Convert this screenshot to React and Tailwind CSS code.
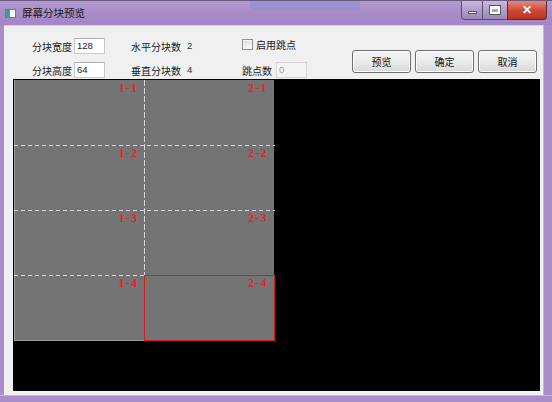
import React from "react";

const cjk = { fontFamily: '"Noto Sans CJK SC", "Noto Sans", sans-serif' };
const num = { fontFamily: '"Liberation Sans", Arial, sans-serif' };
const serif = { fontFamily: '"Liberation Serif", "Times New Roman", serif' };

const cells = [
  ["1-1", "2-1"],
  ["1-2", "2-2"],
  ["1-3", "2-3"],
  ["1-4", "2-4"],
];

function WinButtons() {
  return (
    <div className="flex h-[19px] self-start">
      <div className="w-[22px] h-full rounded-bl-[4px] border border-t-0 border-[#5d4f73] bg-gradient-to-b from-[#c9b8de] to-[#9b86bb] flex items-center justify-center">
        <div className="w-[9px] h-[3px] bg-white border border-[#555] mt-[5px]" />
      </div>
      <div className="w-[24px] h-full border-b border-[#5d4f73] bg-gradient-to-b from-[#c9b8de] to-[#9b86bb] flex items-center justify-center">
        <div className="w-[10px] h-[8px] border-2 border-t-[3px] border-white outline outline-1 outline-[#555]" />
      </div>
      <div className="w-[40px] h-full rounded-br-[4px] border border-t-0 border-[#5d2a24] bg-gradient-to-b from-[#e48a7c] via-[#cf4a3a] to-[#b83424] flex items-center justify-center">
        <span className="text-white text-[12px] font-bold leading-none" style={num}>✕</span>
      </div>
    </div>
  );
}

function TextBox({ value, disabled }) {
  return (
    <div
      className={
        "w-[31px] h-[16px] border px-[2px] flex items-center text-[9.5px] " +
        (disabled
          ? "bg-[#f4f4f4] border-[#d5d5d5] text-[#9a9a9a]"
          : "bg-white border-[#c5c9d0] border-t-[#abadb3] text-[#222]")
      }
      style={num}
    >
      {value}
    </div>
  );
}

function Btn({ children }) {
  return (
    <div className="w-[59px] h-[23px] rounded-[3px] border border-[#707070] bg-gradient-to-b from-[#f3f3f3] via-[#ebebeb] to-[#d8d8d8] flex items-center justify-center text-[10px] text-[#111] shadow-[inset_0_0_0_1px_#fcfcfc]">
      {children}
    </div>
  );
}

export default function App() {
  return (
    <div className="w-[552px] h-[402px] bg-[#a98cc8] flex flex-col overflow-hidden" style={cjk}>
      {/* title bar */}
      <div className="h-[25px] flex border-t border-[#6b5a80] bg-gradient-to-b from-[#b39bd0] via-[#a88bc7] to-[#a387c4] relative">
        <div className="absolute left-[250px] top-0 w-[110px] h-[9px] rounded-b-[4px] bg-[#8c8fd6] opacity-60" />
        <div className="flex items-center gap-[6px] pl-[5px] flex-1">
          <div className="w-[11px] h-[9px] border border-[#6b7d86] bg-white flex">
            <div className="w-[4px] h-full bg-[#3f9f8f]" />
          </div>
          <span className="text-[10.5px] text-[#1a1a1a] leading-none">屏幕分块预览</span>
        </div>
        <div className="pr-[5px]">
          <WinButtons />
        </div>
      </div>

      {/* body */}
      <div className="flex flex-1">
        <div className="w-[4px]" />
        <div className="w-[539px] bg-[#f0f0f0] flex flex-col border-t border-[#d8d0e2]">
          {/* controls */}
          <div className="h-[53px] flex items-start text-[10px] text-[#1a1a1a]">
            <div className="w-[28px]" />
            <div className="w-[99px] flex flex-col gap-[8px] pt-[12px]">
              <div className="h-[16px] flex items-center gap-[2px]">
                <span className="w-[40px]">分块宽度</span>
                <TextBox value="128" />
              </div>
              <div className="h-[16px] flex items-center gap-[2px]">
                <span className="w-[40px]">分块高度</span>
                <TextBox value="64" />
              </div>
            </div>
            <div className="w-[111px] flex flex-col gap-[8px] pt-[12px]">
              <div className="h-[16px] flex items-center gap-[6px]">
                <span>水平分块数</span>
                <span className="text-[9.5px] text-[#333]" style={num}>2</span>
              </div>
              <div className="h-[16px] flex items-center gap-[6px]">
                <span>垂直分块数</span>
                <span className="text-[9.5px] text-[#333]" style={num}>4</span>
              </div>
            </div>
            <div className="w-[110px] flex flex-col gap-[8px] pt-[10px]">
              <div className="h-[16px] flex items-center gap-[3px]">
                <div className="w-[11px] h-[11px] border border-[#8e8f8f] bg-gradient-to-br from-[#dcdcdc] to-[#fbfbfb] shadow-[inset_0_0_0_1px_#f4f4f4]" />
                <span>启用跳点</span>
              </div>
              <div className="h-[16px] flex items-center gap-[4px] mt-[2px]">
                <span>跳点数</span>
                <TextBox value="0" disabled />
              </div>
            </div>
            <div className="flex gap-[4px] pt-[24px]">
              <Btn>预览</Btn>
              <Btn>确定</Btn>
              <Btn>取消</Btn>
            </div>
          </div>

          {/* canvas */}
          <div className="flex flex-1 pl-[9px] pr-[3px] pb-[4px]">
            <div className="flex-1 bg-black pt-[1px] pl-[1px]">
              <div className="relative w-[260px] h-[261px] bg-[#747474] border-l border-b border-[#9c9c9c]">
                <div className="grid grid-cols-2 grid-rows-4 w-full h-[260px]">
                  {cells.flat().map((c) => (
                    <div key={c} className="flex justify-end items-start pr-[6px] pt-[3px]">
                      <span className="text-[11.5px] font-bold leading-none text-[#e8232f] tracking-[1.5px]" style={serif}>
                        {c}
                      </span>
                    </div>
                  ))}
                </div>
                <svg className="absolute left-[-1px] top-0" width="262" height="262">
                  <g stroke="#d6d6d6" strokeWidth="1" fill="none">
                    <line x1="0" y1="65.5" x2="261" y2="65.5" strokeDasharray="4 3" />
                    <line x1="0" y1="130.5" x2="261" y2="130.5" strokeDasharray="4 3" />
                    <line x1="0" y1="195.5" x2="130" y2="195.5" strokeDasharray="4 3" />
                    <line x1="130.5" y1="0" x2="130.5" y2="195" strokeDasharray="6 2" />
                  </g>
                  <rect x="130.5" y="195.5" width="130" height="65" fill="none" stroke="#d41e1e" strokeWidth="1" />
                </svg>
              </div>
            </div>
          </div>
        </div>
        <div className="flex-1 border-l border-[#c4b4da]" />
      </div>
      <div className="h-[7px] border-t border-[#c4b4da]" />
    </div>
  );
}
